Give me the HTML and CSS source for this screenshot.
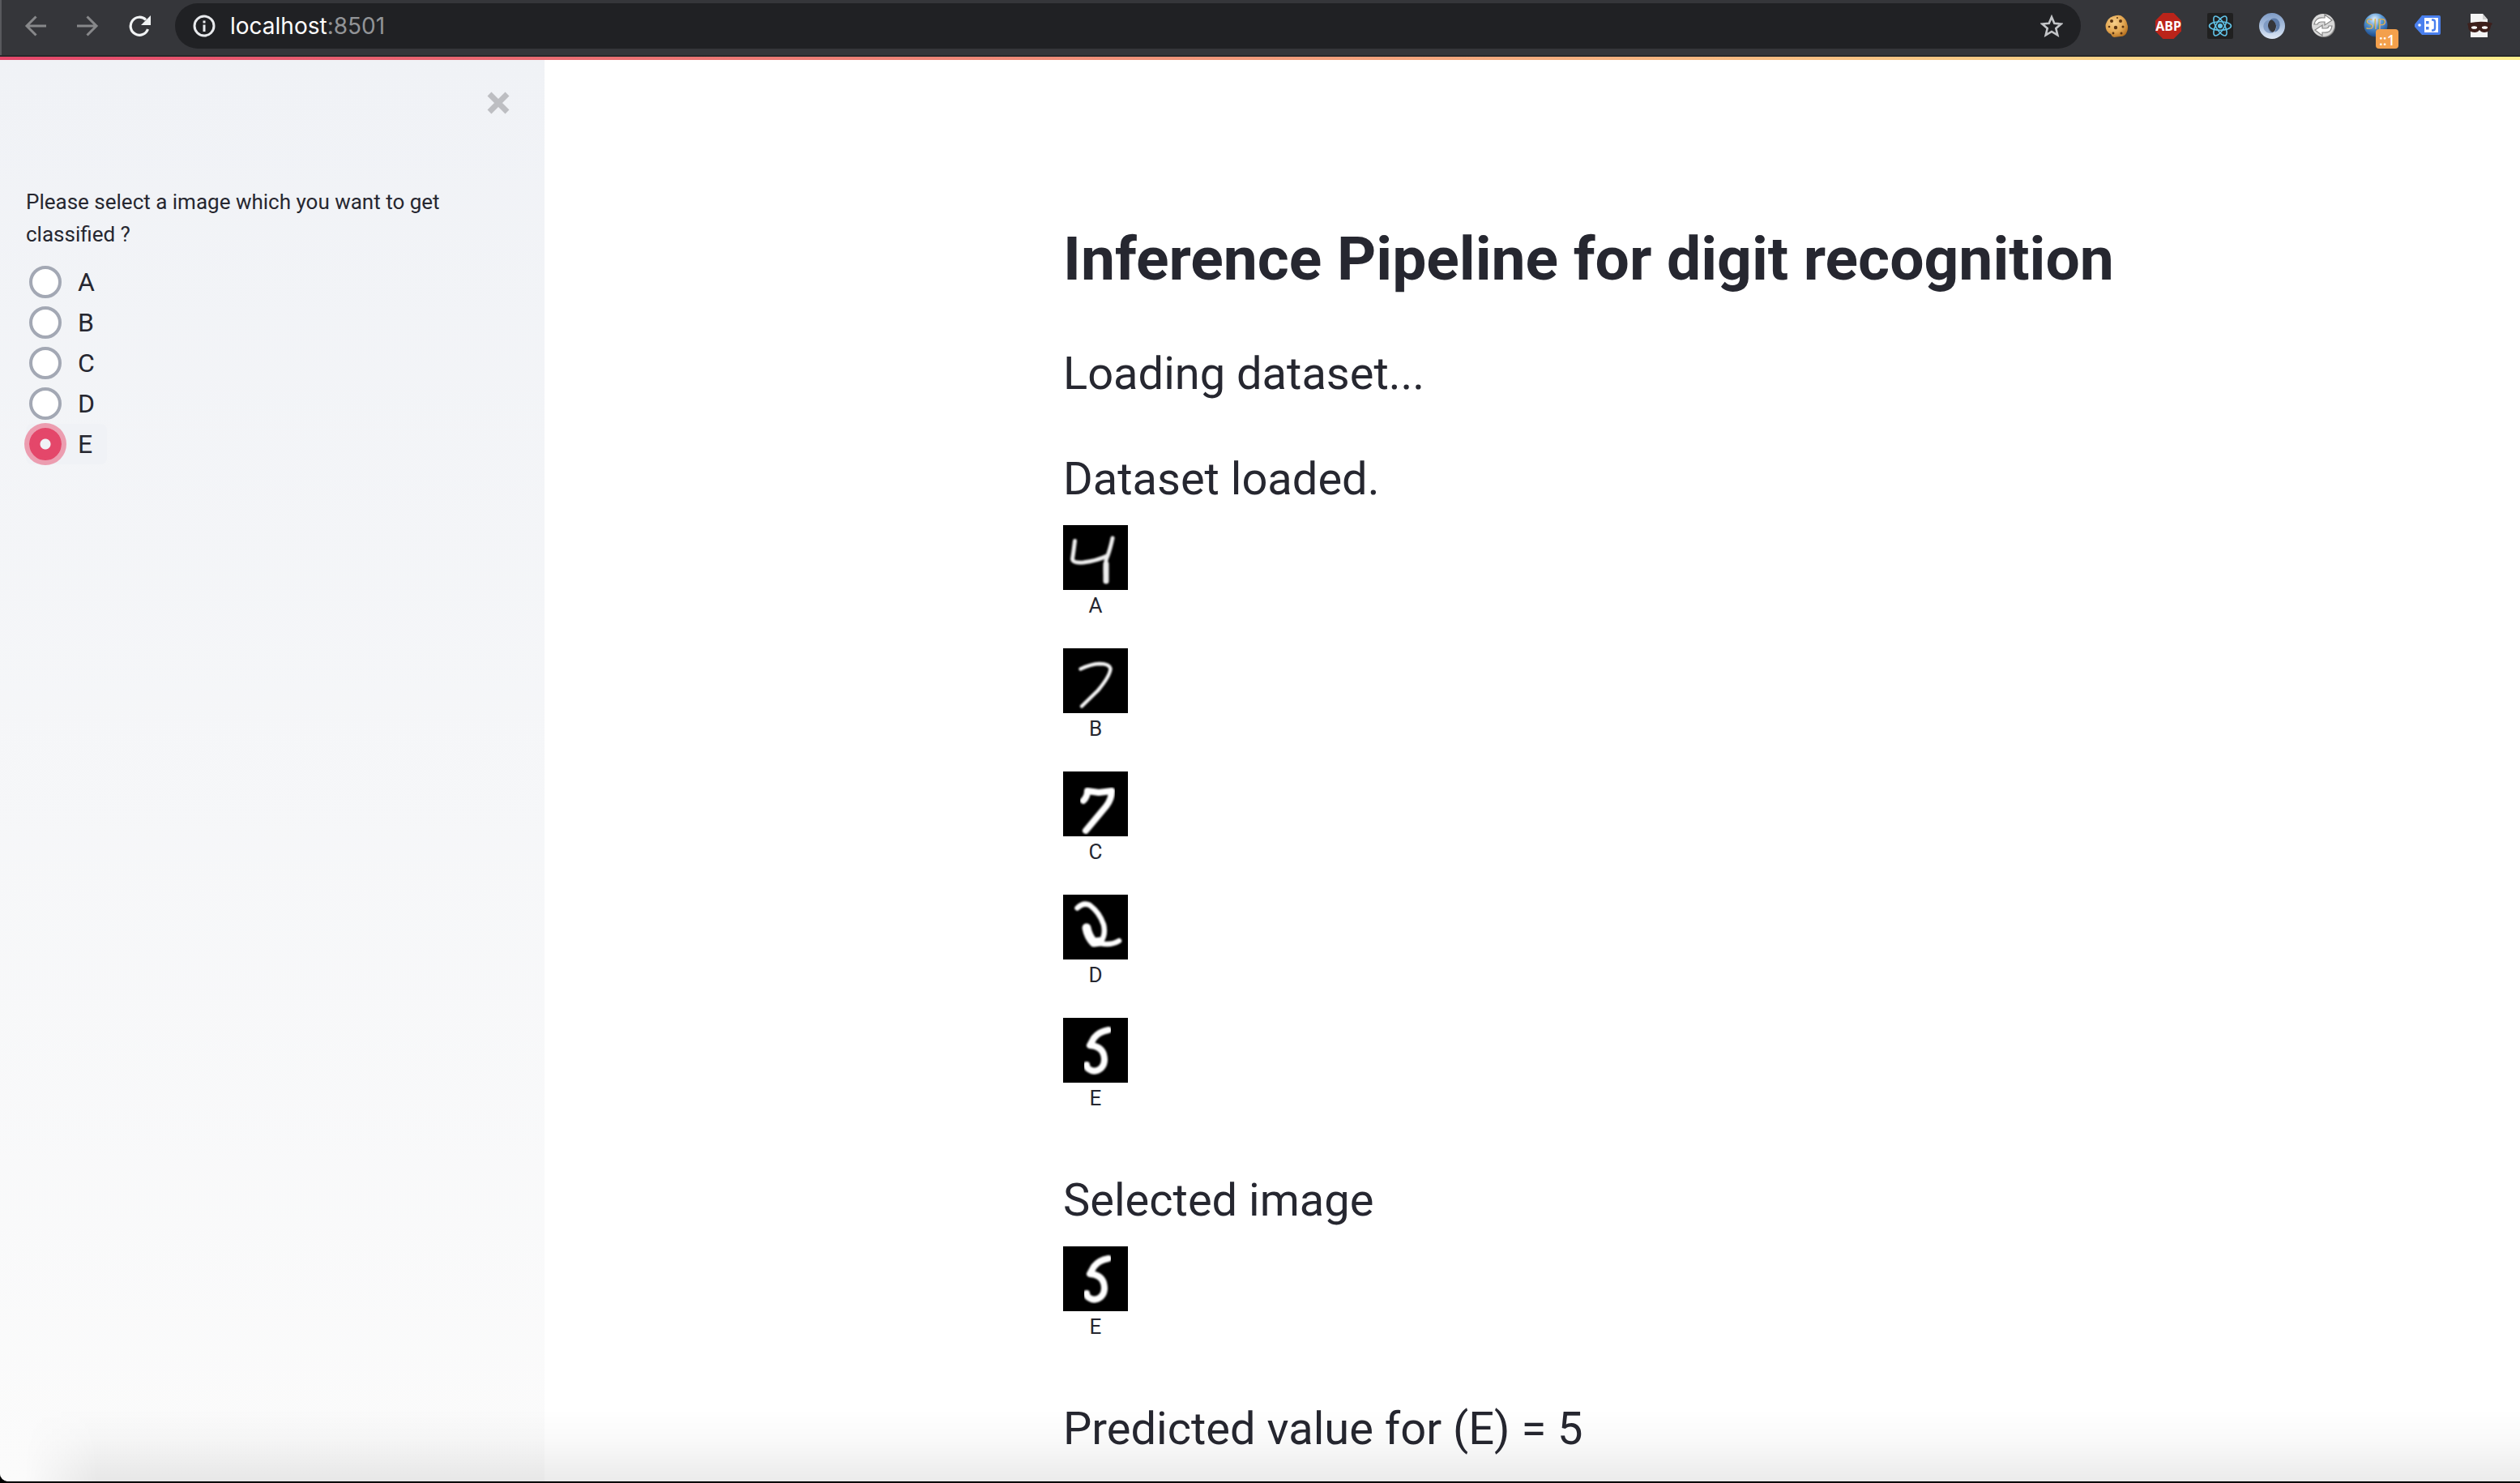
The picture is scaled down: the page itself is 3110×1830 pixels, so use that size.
FILE: index.html
```
<!DOCTYPE html>
<html lang="en">
<head>
<meta charset="utf-8">
<title>Inference Pipeline</title>
<link rel="stylesheet" href="styles.css">
</head>
<body>
<svg class="defs" aria-hidden="true">
  <defs>
    <filter id="soft" x="-10%" y="-10%" width="120%" height="120%"><feGaussianBlur stdDeviation="1"/></filter>
    <radialGradient id="cookie" cx=".4" cy=".35" r=".7"><stop offset="0" stop-color="#f6cf8a"/><stop offset=".6" stop-color="#e3a752"/><stop offset="1" stop-color="#b5701f"/></radialGradient>
    <linearGradient id="ringA" x1="0" y1="0" x2="0" y2="1"><stop offset="0" stop-color="#7f9cc6"/><stop offset=".5" stop-color="#a9bfdd"/><stop offset="1" stop-color="#dfe9f6"/></linearGradient>
    <radialGradient id="globe" cx=".45" cy=".25" r=".8"><stop offset="0" stop-color="#e4f1fb"/><stop offset=".4" stop-color="#5b9bd8"/><stop offset="1" stop-color="#123f80"/></radialGradient>
    <symbol id="digit-five" viewBox="0 0 80 80"><g filter="url(#soft)" fill="none" stroke="#fff" stroke-width="8" stroke-linecap="round" stroke-linejoin="round"><path d="M56 15Q44 17 38 25L33 34Q47 35 50 45Q53 56 47 62Q40 68 33 64Q29 62 29 58"/></g></symbol>
  </defs>
</svg>

<header class="toolbar">
  <nav class="nav">
    <button class="icon-btn" aria-label="Back"><svg viewBox="0 0 28 28" fill="none" stroke="#87888a" stroke-width="3"><path d="M27 14H3M14.500 2.500L3 14l11.500 11.500"/></svg></button>
    <button class="icon-btn" aria-label="Forward"><svg viewBox="0 0 28 28" fill="none" stroke="#87888a" stroke-width="3"><path d="M1 14h24M13.500 2.500L25 14 13.500 25.500"/></svg></button>
    <button class="icon-btn" aria-label="Reload"><svg viewBox="0 0 28 28"><path d="M24.500 18A11 11 0 1 1 22 6.500" fill="none" stroke="#f1f3f4" stroke-width="3.200"/><path d="M28 1v12H16z" fill="#f1f3f4"/></svg></button>
  </nav>
  <div class="address">
    <svg class="info" viewBox="0 0 28 28"><circle cx="14" cy="14" r="12" fill="none" stroke="#e8eaed" stroke-width="3"/><path d="M12.500 12.500h3V21h-3zM12.500 7.500h3v3h-3z" fill="#e8eaed"/></svg>
    <span class="url">localhost<span class="port">:8501</span></span>
    <button class="icon-btn" aria-label="Bookmark"><svg viewBox="0 0 28 28" fill="none" stroke="#c3c5c8" stroke-width="2.600"><path d="M14 3l3.300 7.800 8.400.7-6.400 5.500 2 8.300L14 20.900l-7.300 4.400 2-8.300-6.400-5.500 8.400-.7z"/></svg></button>
  </div>
  <div class="extensions">
    <svg viewBox="0 0 32 32"><path d="M16 3q5-1 8 2 4 3 5 8 2 5 0 10-2 6-8 6l-8 1q-3-1-4-4-3-1-5-4-3-6 0-11Q7 4 16 3z" fill="url(#cookie)"/><g fill="#5a3412"><circle cx="10" cy="10" r="2"/><circle cx="21" cy="10" r="2"/><circle cx="15" cy="18" r="2.200"/><circle cx="7" cy="17" r="1.300"/><circle cx="24" cy="17" r="1.500"/><circle cx="12" cy="25" r="1.400"/><circle cx="22" cy="25" r="1.500"/><circle cx="17" cy="6" r="1"/></g></svg>
    <svg viewBox="0 0 32 32"><path d="M9.400 0h13.200L32 9.400v13.200L22.600 32H9.400L0 22.600V9.400z" fill="#bb241a"/><text x="16" y="22" text-anchor="middle" class="abp">ABP</text></svg>
    <svg viewBox="0 0 32 32"><rect width="32" height="32" rx="2" fill="#202020"/><g fill="none" stroke="#61c3e8" stroke-width="1.600"><ellipse cx="16" cy="16" rx="13.500" ry="5.200"/><ellipse cx="16" cy="16" rx="13.500" ry="5.200" transform="rotate(60 16 16)"/><ellipse cx="16" cy="16" rx="13.500" ry="5.200" transform="rotate(120 16 16)"/></g><circle cx="16" cy="16" r="3" fill="#61c3e8"/></svg>
    <svg viewBox="0 0 32 32"><path fill-rule="evenodd" d="M16 0a16 16 0 1 1 0 32a16 16 0 1 1 0-32zM16 8c-3 0-5 4-5 8s2 8 5 8 5-4 5-8-2-8-5-8z" fill="url(#ringA)"/><path d="M14 8q7-4 11 3 3 9-6 13 5-8-1-14-2-2-4-2z" fill="#5c7aa7"/><path d="M18 24q-8 3-12-4-3-9 7-12-5 8 1 14 2 2 4 2z" fill="#6f8db9" opacity=".7"/></svg>
    <svg viewBox="0 0 32 32"><circle cx="16" cy="16" r="14" fill="#8f8f8f"/><circle cx="15" cy="15" r="14" fill="#d9d9d9"/><g fill="#fff" stroke="#858585" stroke-width="1.200"><path d="M4 14Q6 5 15 6h2V2l9 7-9 6v-4h-4q-4 0-5 3z"/><path d="M26 16q-1 9-10 8h-2v4l-9-7 9-6v4h4q4 0 4-3z"/></g></svg>
    <span class="sip">
      <svg viewBox="0 0 32 32"><circle cx="16" cy="15" r="14.500" fill="url(#globe)"/><text x="16" y="20" text-anchor="middle" class="sip-text">SIP</text></svg>
      <span class="badge">::1</span>
    </span>
    <svg viewBox="0 0 32 32"><path d="M9 3h21q2 0 2 2v20q0 2-2 2H9L0 17v-3z" fill="#4a80ee"/><circle cx="6" cy="15" r="1.800" fill="#fff"/><rect x="12" y="6" width="17" height="18" fill="#fff"/><path d="M14 10h3.500v3.500H14zM14 17h3.500v3.500H14z" fill="#4a80ee"/><path d="M21 8.500h1.500q2.500 0 2.500 3v7q0 3-2.500 3H21" fill="none" stroke="#4a80ee" stroke-width="2.400"/></svg>
    <svg viewBox="0 0 32 32"><path d="M5 1h15l6 7v22H5z" fill="#f4f4f4"/><path d="M20 1l6 7h-6z" fill="#cfcfcf"/><path d="M1 13q15-4 29-1l2 1-2 3q-1 8-8 8-4 0-6-3-2 3-6 3-8 0-8-8z" fill="#3d1f1b"/><ellipse cx="9.500" cy="18" rx="3.600" ry="1.800" fill="#fff"/><ellipse cx="22.500" cy="18" rx="3.600" ry="1.800" fill="#fff"/></svg>
  </div>
</header>
<div class="accent"></div>

<div class="app">
  <aside class="sidebar">
    <button class="close" aria-label="Close sidebar"><svg viewBox="0 0 28 28"><path d="M3 3l22 22M25 3L3 25" stroke="#bdbec2" stroke-width="7"/></svg></button>
    <fieldset class="choices">
      <legend>Please select a image which you want to get classified ?</legend>
      <label class="choice"><input type="radio" name="image" value="A">A</label>
      <label class="choice"><input type="radio" name="image" value="B">B</label>
      <label class="choice"><input type="radio" name="image" value="C">C</label>
      <label class="choice"><input type="radio" name="image" value="D">D</label>
      <label class="choice active"><input type="radio" name="image" value="E" checked>E</label>
    </fieldset>
  </aside>

  <main class="content">
    <h1>Inference Pipeline for digit recognition</h1>
    <h2>Loading dataset...</h2>
    <section>
      <h2>Dataset loaded.</h2>
      <div class="gallery">
        <figure><svg viewBox="0 0 80 80"><g filter="url(#soft)" fill="none" stroke="#eee" stroke-width="5" stroke-linecap="round" stroke-linejoin="round"><path d="M14.500 19.500Q13 32 11.500 42Q12 47 25 46Q42 44 54 38M61 16Q58 30 54.500 39Q51 46 53 69"/><path d="M53 48v21" stroke-width="7"/></g></svg><figcaption>A</figcaption></figure>
        <figure><svg viewBox="0 0 80 80"><g filter="url(#soft)" fill="none" stroke="#f4f4f4" stroke-width="4.500" stroke-linecap="round" stroke-linejoin="round"><path d="M21.500 25.500Q34 19.500 45 19Q57 19 58.500 25Q58 34 43 52L23 71.500"/></g></svg><figcaption>B</figcaption></figure>
        <figure><svg viewBox="0 0 80 80"><g filter="url(#soft)" fill="none" stroke="#fff" stroke-width="8" stroke-linecap="round" stroke-linejoin="round"><path d="M25 36Q30 31 30 24L44 26L60 24Q60 34 53 43L28 73"/></g></svg><figcaption>C</figcaption></figure>
        <figure><svg viewBox="0 0 80 80"><g filter="url(#soft)" fill="none" stroke="#fff" stroke-width="6.500" stroke-linecap="round" stroke-linejoin="round"><path d="M17.500 16.500Q25 9 33 13Q45 22 50 37Q53 50 46 59M46 60Q59 63 69 57"/><path d="M29 41Q31 52 38 59L45 58" stroke-width="11"/></g></svg><figcaption>D</figcaption></figure>
        <figure><svg viewBox="0 0 80 80"><use href="#digit-five"/></svg><figcaption>E</figcaption></figure>
      </div>
    </section>
    <section class="result">
      <h2>Selected image</h2>
      <div class="gallery">
        <figure><svg viewBox="0 0 80 80"><use href="#digit-five"/></svg><figcaption>E</figcaption></figure>
      </div>
    </section>
    <h2 class="result">Predicted value for (E) = 5</h2>
  </main>
  <div class="fade"></div>
</div>
</body>
</html>
```
FILE: styles.css
```
* { box-sizing: border-box; }

body {
  margin: 0;
  height: 100vh;
  display: flex;
  flex-direction: column;
  overflow: hidden;
  padding-bottom: 2px;
  background: #000;
  color: #262730;
  font-family: Roboto, "Liberation Sans", sans-serif;
}

button { border: 0; padding: 0; background: none; cursor: pointer; }
svg { display: block; }
.defs { position: absolute; width: 0; height: 0; }

/* Browser toolbar */
.toolbar {
  display: flex;
  align-items: center;
  padding: 4px 34px 8px 30px;
  background: #35363a;
  border-bottom: 2px solid #27282a;
  box-shadow: inset 2px 0 #58595d;
}
.nav { display: flex; gap: 36px; margin-right: 30px; }
.icon-btn, .icon-btn svg, .info { width: 28px; height: 28px; }
.address {
  flex: 1;
  display: flex;
  align-items: center;
  height: 56px;
  padding: 0 22px;
  border-radius: 28px;
  background: #202124;
}
.url {
  flex: 1;
  margin-left: 18px;
  color: #fff;
  font: 28px/56px Inter, sans-serif;
}
.port { color: #929497; }
.extensions { display: flex; gap: 32px; margin-left: 28px; }
.extensions svg { width: 32px; height: 32px; }
.abp { font: 700 16px "Noto Sans", sans-serif; fill: #fff; }
.sip { position: relative; }
.sip-text { font: 18px "Open Sans", sans-serif; fill: #d8ae55; }
.badge {
  position: absolute;
  left: 16px;
  top: 20px;
  width: 28px;
  height: 24px;
  border-radius: 4px;
  background: #f3a04c;
  color: #fff;
  font: 500 18px/26px "Noto Sans", sans-serif;
  text-align: center;
}
.accent { flex: none; height: 4px; background: linear-gradient(90deg, #e4476a, #ffee8c); }

/* Application */
.app {
  position: relative;
  flex: 1;
  min-height: 0;
  display: flex;
  overflow: hidden;
  background: #fff;
  border-bottom-left-radius: 10px;
}
.sidebar {
  width: 672px;
  padding: 39px 32px;
  background: linear-gradient(#f0f2f6, #fbfbfb);
}
.close { display: block; margin: 0 11px 88px auto; }
.close svg { width: 28px; height: 28px; }
.choices { margin: 0; padding: 0; border: 0; }
.choices legend {
  width: 560px;
  padding: 0;
  margin-bottom: 14px;
  font-size: 26px;
  line-height: 40px;
}
.choice {
  display: flex;
  align-items: center;
  gap: 20px;
  width: 100px;
  height: 50px;
  padding-left: 4px;
  border-radius: 8px;
  font-size: 32px;
}
.choice.active { background: #f0f2f6; }
.choice input {
  appearance: none;
  flex: none;
  width: 40px;
  height: 40px;
  margin: 0;
  border: 4px solid #a3a8b4;
  border-radius: 50%;
  background: #fff;
}
.choice input:checked {
  border-color: #e4476a;
  background: radial-gradient(circle, #f0f2f6 6px, #e4476a 7px);
  box-shadow: 0 0 0 6px #ec9db0;
}

.content { flex: 1; padding: 200px 32px 0 640px; }
h1, h2 { margin: 0; }
h1 { font-size: 75px; line-height: 90px; margin-bottom: 62px; }
h2 { font-size: 56px; line-height: 70px; font-weight: 400; }
h2 + section { margin-top: 60px; }
.result { margin-top: 72px; }
.gallery { display: flex; flex-direction: column; gap: 34px; margin-top: 22px; }
figure { width: 80px; margin: 0; }
figure > svg { width: 80px; height: 80px; background: #000; }
figcaption { font-size: 26px; line-height: 38px; text-align: center; }

/* Shade over the lower edge of the window */
.fade {
  position: absolute;
  left: 0;
  right: 0;
  bottom: 0;
  height: 90px;
  background: linear-gradient(rgba(0, 0, 0, 0), rgba(0, 0, 0, .02) 40%, rgba(0, 0, 0, .08));
  mask-image: linear-gradient(90deg, transparent 30px, #000 120px);
  pointer-events: none;
}
```
